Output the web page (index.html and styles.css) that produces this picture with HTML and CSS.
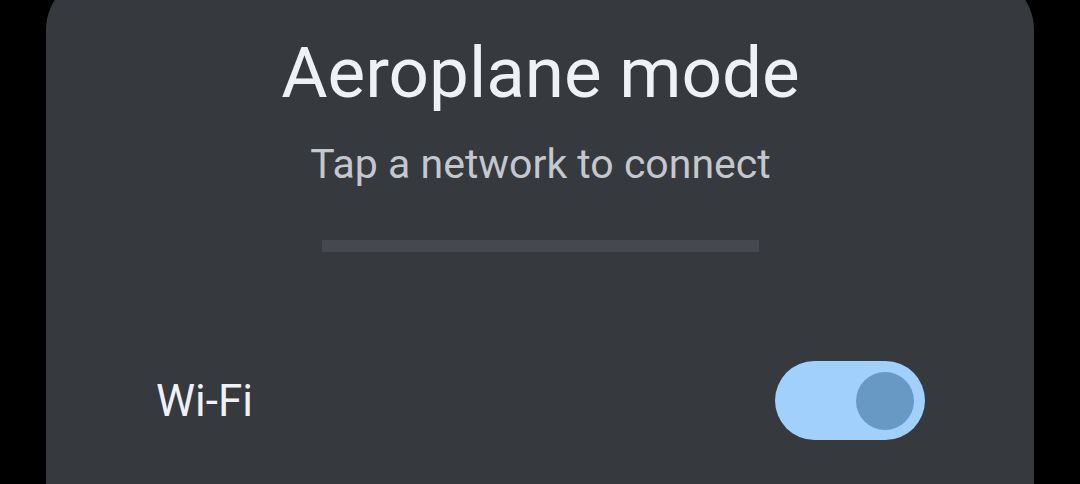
FILE: index.html
```html
<!DOCTYPE html>
<html lang="en">
<head>
	<meta charset="UTF-8">
	<meta name="viewport" content="width=device-width, initial-scale=1.0">
	<title>Aeroplane mode</title>
	<link rel="stylesheet" href="styles.css">
</head>
<body>

	<div class="sheet">
		<h1 class="title">Aeroplane mode</h1>
		<p class="subtitle">Tap a network to connect</p>
		<div class="progress"></div>

		<div class="row">
			<span class="label">Wi-Fi</span>
			<div class="switch">
				<div class="thumb"></div>
			</div>
		</div>
	</div>

</body>
</html>
```

FILE: styles.css
```css
html, body {
	margin: 0;
	background-color: #000000;
	height: 100%;
	overflow: hidden;
}
body {
	font-family: Roboto, 'Noto Sans', sans-serif;
}
.sheet {
	box-sizing: border-box;
	margin: -26px 46px 0 46px;
	padding: 56px 109px 0 110px;
	height: 510px;
	background-color: #36393e;
	border-radius: 56px 56px 0 0;
	display: flex;
	flex-direction: column;
	align-items: center;
}
.title {
	margin: 0;
	font-size: 71px;
	line-height: 86px;
	font-weight: 400;
	color: #f0f1f6;
}
.subtitle {
	margin: 23px 0 0 0;
	font-size: 41px;
	line-height: 50px;
	color: #c4c7cd;
}
.progress {
	margin-top: 51px;
	width: 437px;
	height: 12px;
	background-color: #45484e;
}
.row {
	margin-top: 109px;
	align-self: stretch;
	display: flex;
	align-items: center;
	justify-content: space-between;
}
.label {
	font-size: 44px;
	line-height: 56px;
	color: #f0f1f6;
}
.switch {
	width: 150px;
	height: 79px;
	border-radius: 40px;
	background-color: #a2d0fd;
	display: flex;
	align-items: center;
	justify-content: flex-end;
	padding-right: 11px;
	box-sizing: border-box;
}
.thumb {
	width: 58px;
	height: 58px;
	border-radius: 50%;
	background-color: #6898c4;
}
```
